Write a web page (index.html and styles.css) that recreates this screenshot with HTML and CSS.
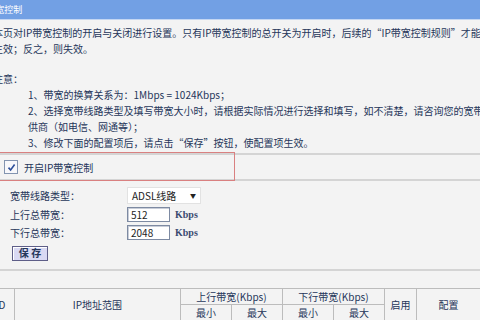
FILE: index.html
```html
<!DOCTYPE html>
<html lang="zh-CN">
<head>
<meta charset="utf-8">
<title>IP带宽控制</title>
<link rel="stylesheet" href="styles.css">
</head>
<body>
<div class="page">
  <div class="titlebar"><span class="title">IP带宽控制</span></div>
  <div class="intro">
    <p>本页对IP带宽控制的开启与关闭进行设置。只有IP带宽控制的总开关为开启时，后续的“IP带宽控制规则”才能够</p>
    <p>生效；反之，则失效。</p>
    <p class="blank"></p>
    <p>注意：</p>
    <div class="notes">
      <p>1、带宽的换算关系为：1Mbps = 1024Kbps；</p>
      <p>2、选择宽带线路类型及填写带宽大小时，请根据实际情况进行选择和填写，如不清楚，请咨询您的宽带提</p>
      <p>供商（如电信、网通等）；</p>
      <p>3、修改下面的配置项后，请点击“保存”按钮，使配置项生效。</p>
    </div>
  </div>
  <div class="enable-row">
    <span class="checkbox"><svg width="9" height="9" viewBox="0 0 9 9"><path d="M1.5 4.6 L3.6 7 L7.6 1.6" fill="none" stroke="#2d4f9a" stroke-width="1.6"/></svg></span>
    <span class="enable-label">开启IP带宽控制</span>
    <span class="highlight"></span>
  </div>
  <div class="form">
    <span class="label">宽带线路类型：</span>
    <span class="field"><span class="select"><span>ADSL线路</span><span class="arrow">▼</span></span></span>
    <span class="label">上行总带宽：</span>
    <span class="field"><span class="input">512</span><span class="unit">Kbps</span></span>
    <span class="label">下行总带宽：</span>
    <span class="field"><span class="input">2048</span><span class="unit">Kbps</span></span>
  </div>
  <div class="actions"><button class="save">保 存</button></div>
  <div class="sep"></div>
  <table class="rules">
    <colgroup>
      <col class="c-id"><col class="c-ip"><col class="c-bw"><col class="c-bw"><col class="c-bw"><col class="c-bw"><col class="c-on"><col class="c-cfg">
    </colgroup>
    <tr>
      <th rowspan="2">ID</th>
      <th rowspan="2">IP地址范围</th>
      <th colspan="2">上行带宽(Kbps)</th>
      <th colspan="2">下行带宽(Kbps)</th>
      <th rowspan="2">启用</th>
      <th rowspan="2">配置</th>
    </tr>
    <tr>
      <th>最小</th><th>最大</th><th>最小</th><th>最大</th>
    </tr>
  </table>
</div>
</body>
</html>
```
FILE: styles.css
```css
html, body {
  margin: 0;
  padding: 0;
}
body {
  width: 480px;
  height: 320px;
  overflow: hidden;
  background: #f3f3f3;
  font-family: "Noto Sans CJK SC", "Noto Sans", sans-serif;
  font-size: 10px;
  color: #26365a;
}
.page {
  width: 480px;
}
.titlebar {
  height: 19px;
  background: #72a0e4;
  border-bottom: 1px solid #c4d6f2;
  display: flex;
  align-items: center;
  overflow: hidden;
}
.title {
  color: #fff;
  font-size: 9px;
  margin-left: -22px;
  white-space: nowrap;
}
.intro {
  margin-left: -7px;
  padding-top: 5px;
  white-space: nowrap;
  line-height: 16px;
}
.intro p {
  margin: 0;
}
.intro .blank {
  height: 14px;
}
.notes {
  padding-left: 35px;
}
.enable-row {
  position: relative;
  margin-top: 2px;
  height: 24px;
  border-top: 2px solid #d4d4d4;
  border-bottom: 2px solid #d4d4d4;
  display: flex;
  align-items: center;
  gap: 6px;
  padding-left: 4px;
}
.checkbox {
  width: 12px;
  height: 12px;
  border: 1px solid #8394b0;
  background: #f8f8fb;
  display: flex;
  align-items: center;
  justify-content: center;
}
.enable-label {
  font-size: 10px;
}
.highlight {
  position: absolute;
  left: -2px;
  top: -3px;
  width: 235px;
  height: 27px;
  border: 1px solid #d98080;
}
.form {
  display: grid;
  grid-template-columns: 127px auto;
  row-gap: 3px;
  padding-top: 6px;
  align-items: center;
}
.label {
  padding-left: 10px;
}
.field {
  display: flex;
  align-items: center;
  gap: 5px;
}
.select {
  width: 64px;
  height: 15px;
  background: #fff;
  border: 1px solid #e2e2e2;
  display: flex;
  align-items: center;
  justify-content: space-between;
  padding: 0 4px 0 4px;
  color: #222;
}
.arrow {
  font-size: 6px;
}
.input {
  width: 38px;
  height: 13px;
  background: #fff;
  border: 1px solid #7d8aa2;
  box-shadow: inset 1px 1px 0 #c8cdd8;
  padding-left: 3px;
  line-height: 13px;
  color: #222;
}
.unit {
  font-family: "Liberation Serif", serif;
  font-weight: bold;
  font-size: 10px;
  color: #3a4a70;
}
.actions {
  padding: 5px 0 0 12px;
}
.save {
  width: 36px;
  height: 15px;
  padding: 0;
  background: #d9d9f3;
  border: 1px solid #5e5e88;
  box-shadow: inset 1px 1px 0 #fff;
  font-family: "Noto Sans CJK SC", sans-serif;
  font-size: 10px;
  font-weight: bold;
  color: #26365a;
  line-height: 12px;
}
.sep {
  margin-top: 8px;
  border-top: 2px solid #d4d4d4;
}
.rules {
  margin-top: 17px;
  margin-left: -14px;
  width: 494px;
  border-collapse: collapse;
  table-layout: fixed;
}
.rules th {
  border: 1px solid #bcbcbc;
  font-weight: normal;
  height: 15px;
  padding: 0;
  text-align: center;
  line-height: 15px;
}
.c-id { width: 28px; }
.c-ip { width: 166px; }
.c-bw { width: 51px; }
.c-on { width: 32px; }
.c-cfg { width: 64px; }
```
